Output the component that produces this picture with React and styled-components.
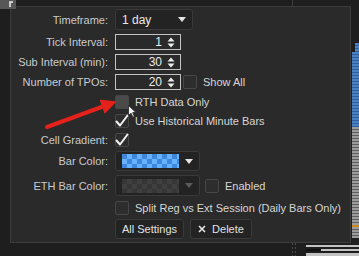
import styled, { createGlobalStyle } from 'styled-components'

const GlobalStyle = createGlobalStyle`
  html, body {
    margin: 0;
    padding: 0;
    background: #1e1e1e;
  }
  body {
    font-family: "Liberation Sans", Arial, sans-serif;
    font-size: 11px;
  }
`

const Page = styled.div`
  position: relative;
  width: 359px;
  height: 256px;
  overflow: hidden;
  display: grid;
  grid-template-columns: 10px 341px 1px 7px;
  grid-template-rows: 6px 237px 13px;
  background: #1e1e1e;
`

const TopBar = styled.div`
  grid-column: 1 / 5;
  grid-row: 1;
  display: flex;
  align-items: flex-start;
`

const Tab = styled.div`
  width: 16px;
  height: 9px;
  background: #575757;
  display: flex;
  justify-content: flex-end;
  padding-right: 2px;
  box-sizing: border-box;
  position: relative;
  z-index: 2;
`

const GridLine = styled.div`
  width: 1px;
  height: ${p => p.$h || '100%'};
  margin-left: ${p => p.$ml || 0}px;
  background: ${p => p.$dashed
    ? 'repeating-linear-gradient(#4a4a4a 0 2px, transparent 2px 4px)'
    : '#3c3c3c'};
`

const Panel = styled.div`
  grid-column: 2;
  grid-row: 2;
  box-sizing: border-box;
  background: #2a2a2a;
  border: 1px solid #3c3c3c;
  padding: 2px 0 3px;
  display: grid;
  grid-template-columns: 97px 1fr;
  grid-template-rows: 21px 16px 16px 16px 15px 15px 15px 20px 21px 15px 20px;
  column-gap: 7px;
  row-gap: 4px;
`

const Label = styled.div`
  grid-column: 1;
  justify-self: end;
  align-self: center;
  color: #c9cbcf;
  white-space: nowrap;
`

const Cell = styled.div`
  grid-column: 2;
  display: flex;
  align-items: center;
  gap: ${p => p.$gap ?? 6}px;
  color: #d6d6d6;
  white-space: nowrap;
`

const Text = styled.span`
  margin-left: ${p => p.$ml || 0}px;
`

const Dropdown = styled.div`
  box-sizing: border-box;
  width: ${p => p.$w}px;
  height: 100%;
  background: #232323;
  border: 1px solid #3a3a3a;
  border-radius: 3px;
  display: flex;
  align-items: center;
  justify-content: space-between;
  padding: 0 6px;
  color: #e8e8e8;
  font-size: ${p => p.$fs || 11}px;
`

const Caret = styled.span`
  width: 0;
  height: 0;
  border-left: 4px solid transparent;
  border-right: 4px solid transparent;
  border-top: 5px solid ${p => p.$dim ? '#5a5a5a' : '#e6e6e6'};
`

const Swatch = styled.div`
  width: 57px;
  height: 14px;
  background: repeating-conic-gradient(
      ${p => p.$dim ? '#3f3f3f' : '#66b2ff'} 0 25%,
      ${p => p.$dim ? '#363636' : '#3f87dc'} 0 50%
    ) 0 0 / 10px 10px;
`

const NumberBox = styled.div`
  box-sizing: border-box;
  width: 66px;
  height: 100%;
  border: 1px solid #c4c4c4;
  background: #2a2a2a;
  display: flex;
  align-items: center;
  justify-content: flex-end;
  gap: 5px;
  padding-right: 5px;
  color: #ececec;
  font-size: 12px;
`

const Box = styled.div`
  box-sizing: border-box;
  width: 14px;
  height: 14px;
  flex: none;
  border: 1px solid #474747;
  border-radius: 2px;
  background: ${p => p.$hover ? '#4a4a4a' : '#2d2d2d'};
  margin-left: ${p => p.$ml || 0}px;
  display: flex;
  align-items: center;
  justify-content: center;
`

const Button = styled.div`
  box-sizing: border-box;
  height: 100%;
  width: ${p => p.$w}px;
  background: #232323;
  border: 1px solid #3a3a3a;
  border-radius: 3px;
  display: flex;
  align-items: center;
  justify-content: center;
  gap: 6px;
  color: #e2e2e2;
`

const Strip = styled.div`
  grid-column: 4;
  grid-row: 1 / 3;
  display: flex;
  flex-direction: column;
`

const Stripe = styled.div`
  height: ${p => p.$h}px;
  margin-left: ${p => p.$ml || 0}px;
  background: ${p => p.$solid || `repeating-linear-gradient(${p.$a} 0 2px, ${p.$b} 2px 3px)`};
`

const BottomBar = styled.div`
  grid-column: 1 / 5;
  grid-row: 3;
  display: flex;
  padding-left: 292px;
`

const Bars = styled.div`
  flex: 1;
  margin-left: 10px;
  padding-top: 2px;
  display: flex;
  flex-direction: column;
  gap: 2px;
`

const Bar = styled.div`
  height: ${p => p.$h}px;
  background: ${p => p.$split
    ? 'linear-gradient(90deg, #111 0 15px, #c2c2c2 15px)'
    : '#c2c2c2'};
`

const Overlay = styled.svg`
  position: absolute;
  left: ${p => p.$x}px;
  top: ${p => p.$y}px;
  pointer-events: none;
`

const Check = () => (
  <svg width="14" height="14" viewBox="0 0 14 14" style={{ overflow: 'visible' }}>
    <path d="M1.5 7.5 L5 11.5 L12.5 1.5" fill="none" stroke="#f2f2f2" strokeWidth="2" strokeLinecap="round" strokeLinejoin="round" />
  </svg>
)

const Spinner = () => (
  <svg width="8" height="11" viewBox="0 0 8 11">
    <path d="M4 0.5 L7.5 4.5 L0.5 4.5 Z" fill="#ececec" />
    <path d="M4 10.5 L7.5 6.5 L0.5 6.5 Z" fill="#ececec" />
  </svg>
)

const NumberField = ({ value }) => (
  <NumberBox>
    <span>{value}</span>
    <Spinner />
  </NumberBox>
)

const CheckBox = ({ checked, hover, ml }) => (
  <Box $hover={hover} $ml={ml}>{checked && <Check />}</Box>
)

const App = () => {
  return (
    <>
      <GlobalStyle />
      <Page>
        <TopBar>
          <Tab>
            <svg width="5" height="7" viewBox="0 0 5 7">
              <path d="M1 7 V2 H4" fill="none" stroke="#f0f0f0" strokeWidth="1.5" />
            </svg>
          </Tab>
          <GridLine $ml={276} />
        </TopBar>

        <Panel>
          <Label>Timeframe:</Label>
          <Cell>
            <Dropdown $w={78} $fs={12}>
              <span>1 day</span>
              <Caret />
            </Dropdown>
          </Cell>

          <Label>Tick Interval:</Label>
          <Cell><NumberField value="1" /></Cell>

          <Label>Sub Interval (min):</Label>
          <Cell><NumberField value="30" /></Cell>

          <Label>Number of TPOs:</Label>
          <Cell>
            <NumberField value="20" />
            <CheckBox ml={-4} />
            <Text>Show All</Text>
          </Cell>

          <Cell>
            <CheckBox hover />
            <Text>RTH Data Only</Text>
          </Cell>

          <Cell>
            <CheckBox checked />
            <Text>Use Historical Minute Bars</Text>
          </Cell>

          <Label>Cell Gradient:</Label>
          <Cell><CheckBox checked /></Cell>

          <Label>Bar Color:</Label>
          <Cell>
            <Dropdown $w={85}>
              <Swatch />
              <Caret />
            </Dropdown>
          </Cell>

          <Label>ETH Bar Color:</Label>
          <Cell $gap={5}>
            <Dropdown $w={85}>
              <Swatch $dim />
              <Caret $dim />
            </Dropdown>
            <CheckBox />
            <Text $ml={1}>Enabled</Text>
          </Cell>

          <Cell>
            <CheckBox />
            <Text>Split Reg vs Ext Session (Daily Bars Only)</Text>
          </Cell>

          <Cell>
            <Button $w={69}>All Settings</Button>
            <Button $w={62}>
              <svg width="8" height="8" viewBox="0 0 8 8">
                <path d="M1 1 L7 7 M7 1 L1 7" stroke="#e6e6e6" strokeWidth="1.6" />
              </svg>
              <span>Delete</span>
            </Button>
          </Cell>
        </Panel>

        <Strip>
          <Stripe $h={43} $solid="transparent" />
          <Stripe $h={9} $ml={3} $a="#4a80c4" $b="#2f5f9c" />
          <Stripe $h={75} $a="#4a80c4" $b="#2f5f9c" />
          <Stripe $h={98} $a="#9c9c9c" $b="#5e5e5e" />
          <Stripe $h={2} $solid="#d08a1c" />
          <Stripe $h={11} $a="#9c9c9c" $b="#5e5e5e" />
        </Strip>

        <BottomBar>
          <GridLine $dashed />
          <GridLine $dashed $ml={2} />
          <Bars>
            <Bar $h={2} />
            <Bar $h={3} $split />
            <Bar $h={3} />
          </Bars>
        </BottomBar>

        <Overlay $x={40} $y={95} width="85" height="40" viewBox="0 0 85 40">
          <path d="M7 32 L63 11.5" stroke="#e5211b" strokeWidth="4" strokeLinecap="round" />
          <path d="M75 7 L65 17.6 L60.6 5.4 Z" fill="#e5211b" stroke="#e5211b" strokeWidth="1.5" strokeLinejoin="round" />
        </Overlay>

        <Overlay $x={128} $y={105} width="9" height="13" viewBox="0 0 9 13">
          <path d="M0.5 0.5 L0.5 10.5 L3 8.2 L4.8 12.2 L6.4 11.5 L4.7 7.6 L8 7.6 Z" fill="#f4f4f4" stroke="#222" strokeWidth="0.8" />
        </Overlay>
      </Page>
    </>
  )
}

export default App
